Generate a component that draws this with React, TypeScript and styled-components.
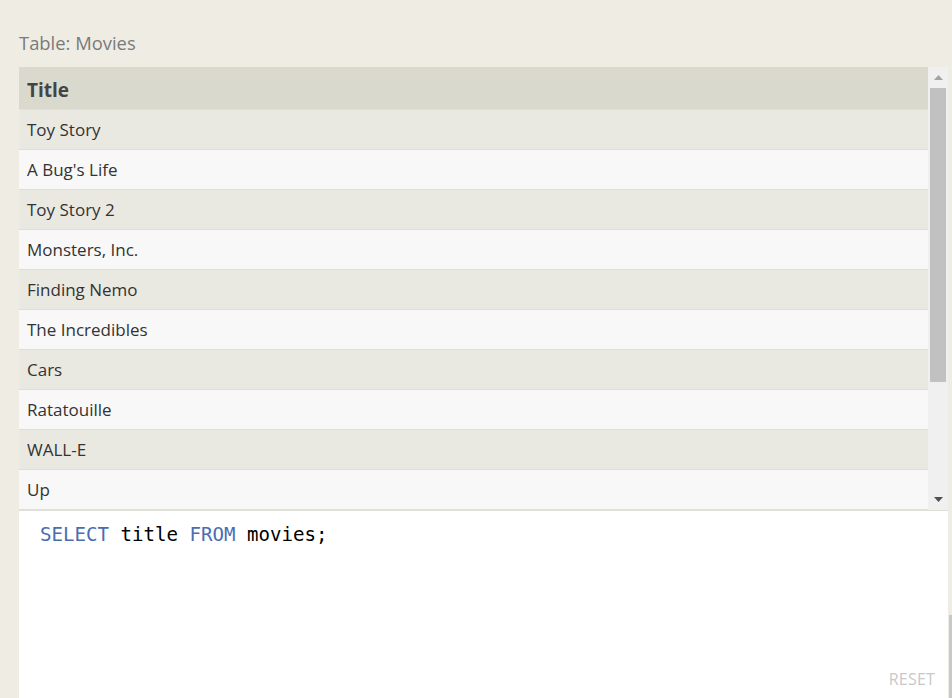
import React from "react";
import styled, { createGlobalStyle } from "styled-components";

const movies = [
  "Toy Story",
  "A Bug's Life",
  "Toy Story 2",
  "Monsters, Inc.",
  "Finding Nemo",
  "The Incredibles",
  "Cars",
  "Ratatouille",
  "WALL-E",
  "Up",
];

const GlobalStyle = createGlobalStyle`
  html, body {
    margin: 0;
    padding: 0;
    background: #efece4;
    overflow: hidden;
  }
`;

const Page = styled.div`
  padding: 30px 0 0 19px;
  font-family: "Open Sans", "Noto Sans", sans-serif;
`;

const Label = styled.div`
  font-size: 18.4px;
  line-height: 26px;
  color: #7a7a7a;
  margin-bottom: 11px;
`;

const Card = styled.div`
  width: 929px;
  display: flex;
  flex-direction: column;
`;

const Results = styled.div`
  display: flex;
  height: 443px;
  border-bottom: 1px solid #e0dfd7;
`;

const Table = styled.div`
  width: 909px;
  display: flex;
  flex-direction: column;
  overflow: hidden;
`;

const HeaderCell = styled.div`
  height: 43px;
  flex: none;
  box-sizing: border-box;
  padding: 4px 0 0 8px;
  background: #dad9cd;
  border-bottom: 1px solid #e2e1d9;
  display: flex;
  align-items: center;
  font-size: 19px;
  font-weight: 700;
  color: #444;
`;

const Row = styled.div<{ $odd: boolean }>`
  height: 39px;
  flex: none;
  background: ${(p) => (p.$odd ? "#eae9e1" : "#f8f8f8")};
  border-bottom: 1px solid #dfdfd8;
  display: flex;
  align-items: center;
  padding-left: 8px;
  font-size: 17px;
  color: #333;
`;

const ScrollTrack = styled.div`
  width: 20px;
  background: #f0f0f0;
  display: flex;
  flex-direction: column;
  align-items: center;
`;

const Arrow = styled.div`
  height: 21px;
  width: 100%;
  display: flex;
  align-items: center;
  justify-content: center;
  flex: none;
`;

const Thumb = styled.div`
  width: 16px;
  height: 294px;
  background: #c1c1c1;
  flex: none;
`;

const Spacer = styled.div`
  flex: 1;
`;

const Editor = styled.div`
  background: #fff;
  height: 187px;
  display: flex;
  flex-direction: column;
`;

const Code = styled.pre`
  margin: 0;
  padding: 10px 0 0 21px;
  font-family: "DejaVu Sans Mono", "Liberation Mono", monospace;
  font-size: 19.1px;
  line-height: 28px;
  color: #000;
  flex: 1;
`;

const Keyword = styled.span`
  color: #4a6db0;
`;

const Footer = styled.div`
  display: flex;
  justify-content: flex-end;
  padding: 0 13px 8px 0;
`;

const Reset = styled.span`
  font-size: 16px;
  color: #c8c8c8;
  letter-spacing: 0.2px;
`;

const PageScroll = styled.div`
  position: fixed;
  right: 0;
  top: 615px;
  bottom: 0;
  width: 3px;
  background: #c8c8c8;
`;

export default function App() {
  return (
    <>
      <GlobalStyle />
      <Page>
        <Label>Table: Movies</Label>
        <Card>
          <Results>
            <Table>
              <HeaderCell>Title</HeaderCell>
              {movies.map((m, i) => (
                <Row key={m} $odd={i % 2 === 0}>
                  {m}
                </Row>
              ))}
            </Table>
            <ScrollTrack>
              <Arrow>
                <svg width="9" height="5" viewBox="0 0 9 5">
                  <path d="M4.5 0 L9 5 L0 5 Z" fill="#a3a3a3" />
                </svg>
              </Arrow>
              <Thumb />
              <Spacer />
              <Arrow>
                <svg width="9" height="5" viewBox="0 0 9 5">
                  <path d="M0 0 L9 0 L4.5 5 Z" fill="#505050" />
                </svg>
              </Arrow>
            </ScrollTrack>
          </Results>
          <Editor>
            <Code>
              <Keyword>SELECT</Keyword> title <Keyword>FROM</Keyword> movies;
            </Code>
            <Footer>
              <Reset>RESET</Reset>
            </Footer>
          </Editor>
        </Card>
      </Page>
      <PageScroll />
    </>
  );
}
